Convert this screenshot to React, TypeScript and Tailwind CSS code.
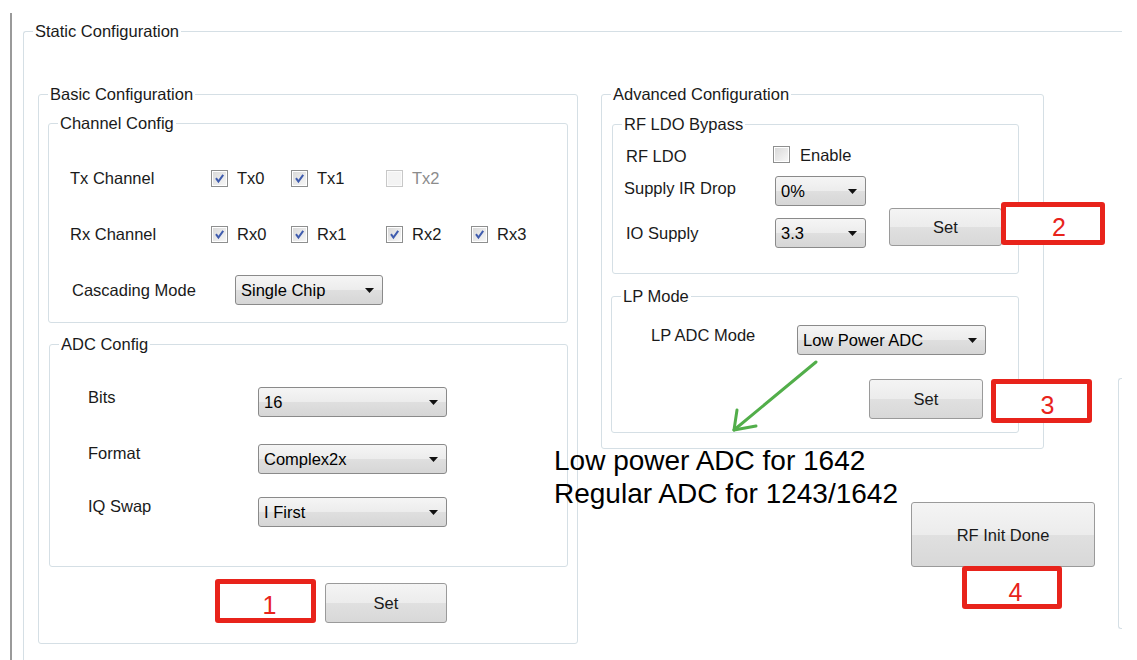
import React from "react";

type BoxProps = {
  title: string;
  className?: string;
  children?: React.ReactNode;
};

// classic windows group box, drawn with fieldset + legend
function GroupBox({ title, className = "", children }: BoxProps) {
  return (
    <fieldset className={`min-w-0 shrink-0 rounded-[3px] border border-[#d5dfe5] ${className}`}>
      <legend className="ml-[9px] px-[2px] leading-[18px]">{title}</legend>
      {children}
    </fieldset>
  );
}

function Checkbox({ checked = false, disabled = false }: { checked?: boolean; disabled?: boolean }) {
  return (
    <span
      className={`flex h-[17px] w-[17px] shrink-0 items-center justify-center border p-[1px] ${
        disabled ? "border-[#c8c8c8] bg-[#fbfbfb]" : "border-[#8e8f8f] bg-white"
      }`}
    >
      <span
        className={`flex h-full w-full items-center justify-center ${
          disabled ? "bg-[#f3f3f3]" : "bg-[linear-gradient(135deg,#d9d9d9,#f7f7f7)]"
        }`}
      >
        {checked && (
          <svg width="11" height="11" viewBox="0 0 11 11">
            <path d="M2 5.2 L4.4 8.6 L9.2 1.8" fill="none" stroke="#3f5cae" strokeWidth="2" />
          </svg>
        )}
      </span>
    </span>
  );
}

function Dropdown({ value, className = "" }: { value: string; className?: string }) {
  return (
    <div
      className={`flex shrink-0 items-center justify-between rounded-[3px] border border-[#8a8a8a] bg-[linear-gradient(to_bottom,#f5f5f5,#ececec_50%,#dfdfdf_51%,#d6d6d6)] pl-[5px] pr-[8px] text-black ${className}`}
    >
      <span className="whitespace-nowrap">{value}</span>
      <svg width="9" height="5" viewBox="0 0 9 5">
        <path d="M0 0H9L4.5 5Z" fill="#111" />
      </svg>
    </div>
  );
}

function Button({ label, className = "" }: { label: string; className?: string }) {
  return (
    <button
      className={`shrink-0 rounded-[3px] border border-[#9a9a9a] bg-[linear-gradient(to_bottom,#f4f4f4,#ececec_50%,#e0e0e0_51%,#d8d8d8)] text-center text-[#1a1a1a] ${className}`}
    >
      {label}
    </button>
  );
}

function Tag({ n, className = "", inner = "" }: { n: string; className?: string; inner?: string }) {
  return (
    <div
      className={`absolute flex items-center justify-center rounded-[3px] border-[5px] border-[#e8231b] bg-white text-[25px] leading-[28px] text-[#e8231b] ${className}`}
    >
      <span className={inner}>{n}</span>
    </div>
  );
}

function CheckItem({ label, checked, disabled, className = "" }: { label: string; checked?: boolean; disabled?: boolean; className?: string }) {
  return (
    <div className={`flex items-center gap-[9px] ${className}`}>
      <Checkbox checked={checked} disabled={disabled} />
      <span className={disabled ? "text-[#8c8c8c]" : ""}>{label}</span>
    </div>
  );
}

export default function App() {
  return (
    <div className="relative h-[660px] w-[1137px] overflow-hidden bg-white font-['Liberation_Sans',Arial,sans-serif] text-[16.5px] leading-[18px] text-[#1a1a1a]">
      <div className="ml-[10px] h-full pt-[13px]">
        <div className="h-full border-l-2 border-[#9a9a9a] pl-[11px] pt-[9px]">
          <GroupBox
            title="Static Configuration"
            className="h-[700px] w-[1099px] rounded-none rounded-tl-[3px] border-b-0 border-r-0"
          >
            <div className="flex items-start">
              {/* Basic Configuration */}
              <GroupBox title="Basic Configuration" className="ml-[14px] mt-[45px] h-[559px] w-[540px]">
                <GroupBox title="Channel Config" className="ml-[9px] mt-[11px] h-[209px] w-[520px]">
                  <div className="flex flex-col pl-[21px] pt-[18px]">
                    <div className="flex h-[56px] items-center">
                      <span className="w-[141px]">Tx Channel</span>
                      <CheckItem label="Tx0" checked className="w-[80px]" />
                      <CheckItem label="Tx1" checked className="w-[95px]" />
                      <CheckItem label="Tx2" disabled />
                    </div>
                    <div className="flex h-[56px] items-center">
                      <span className="w-[141px]">Rx Channel</span>
                      <CheckItem label="Rx0" checked className="w-[80px]" />
                      <CheckItem label="Rx1" checked className="w-[95px]" />
                      <CheckItem label="Rx2" checked className="w-[85px]" />
                      <CheckItem label="Rx3" checked />
                    </div>
                    <div className="flex h-[56px] items-center">
                      <span className="w-[165px] pl-[2px]">Cascading Mode</span>
                      <Dropdown value="Single Chip" className="h-[30px] w-[148px]" />
                    </div>
                  </div>
                </GroupBox>

                <GroupBox title="ADC Config" className="ml-[10px] mt-[12px] h-[232px] w-[519px]">
                  <div className="flex flex-col pl-[38px]">
                    <div className="mt-[34px] flex items-start">
                      <span className="mt-[1px] w-[170px]">Bits</span>
                      <Dropdown value="16" className="h-[30px] w-[189px]" />
                    </div>
                    <div className="mt-[27px] flex items-start">
                      <span className="w-[170px]">Format</span>
                      <Dropdown value="Complex2x" className="h-[30px] w-[189px]" />
                    </div>
                    <div className="mt-[23px] flex items-start">
                      <span className="w-[170px]">IQ Swap</span>
                      <Dropdown value="I First" className="h-[30px] w-[189px]" />
                    </div>
                  </div>
                </GroupBox>

                <div className="ml-[286px] mt-[16px] flex">
                  <Button label="Set" className="h-[40px] w-[122px]" />
                </div>
              </GroupBox>

              {/* Advanced Configuration + RF Init */}
              <div className="ml-[23px] mt-[45px] flex w-[443px] shrink-0 flex-col">
                <GroupBox title="Advanced Configuration" className="h-[364px] w-[443px]">
                  <GroupBox title="RF LDO Bypass" className="ml-[10px] mt-[12px] h-[159px] w-[407px]">
                    <div className="flex items-start">
                      <div className="flex w-[253px] flex-col pl-[13px]">
                        <div className="mt-[13px] flex h-[17px] items-center">
                          <span className="w-[147px] pt-[2px]">RF LDO</span>
                          <CheckItem label="Enable" className="gap-[10px]" />
                        </div>
                        <div className="mt-[13px] flex h-[30px] items-center">
                          <span className="w-[149px] -translate-x-[2px] -translate-y-[3px]">Supply IR Drop</span>
                          <Dropdown value="0%" className="h-[30px] w-[91px]" />
                        </div>
                        <div className="mt-[12px] flex h-[30px] items-center">
                          <span className="w-[149px]">IO Supply</span>
                          <Dropdown value="3.3" className="h-[30px] w-[91px]" />
                        </div>
                      </div>
                      <Button label="Set" className="ml-[23px] mt-[75px] h-[38px] w-[113px]" />
                    </div>
                  </GroupBox>

                  <GroupBox title="LP Mode" className="ml-[9px] mt-[13px] h-[146px] w-[408px]">
                    <div className="mt-[20px] flex items-start pl-[39px]">
                      <span className="mt-[1px] w-[146px]">LP ADC Mode</span>
                      <Dropdown value="Low Power ADC" className="h-[30px] w-[189px]" />
                    </div>
                    <Button label="Set" className="ml-[257px] mt-[24px] h-[40px] w-[114px]" />
                  </GroupBox>
                </GroupBox>

                <Button label="RF Init Done" className="ml-[310px] mt-[53px] h-[65px] w-[184px]" />
              </div>

              {/* next group box, cut off by the window edge */}
              <div className="ml-[74px] mt-[338px] h-[251px] w-[4px] shrink-0 rounded-l-[3px] border-y border-l border-[#d5dfe5]" />
            </div>
          </GroupBox>
        </div>
      </div>

      {/* annotations drawn over the screenshot */}
      <Tag n="1" className="left-[215px] top-[579px] h-[44px] w-[101px]" inner="pl-[8px] pt-[8px]" />
      <Tag n="2" className="left-[1001px] top-[202px] h-[43px] w-[104px]" inner="pl-[12px] pt-[6px]" />
      <Tag n="3" className="left-[991px] top-[379px] h-[44px] w-[101px]" inner="pl-[12px] pt-[8px]" />
      <Tag n="4" className="left-[962px] top-[566px] h-[43px] w-[100px]" inner="pl-[7px] pt-[8px]" />

      <svg className="absolute left-[725px] top-[355px]" width="100" height="85" viewBox="0 0 100 85">
        <path d="M91 7 L9 75" stroke="#52ae4a" strokeWidth="3" strokeLinecap="round" fill="none" />
        <path d="M12 55 L9 75 L31 71" stroke="#52ae4a" strokeWidth="3" strokeLinecap="round" strokeLinejoin="round" fill="none" />
      </svg>

      <div className="absolute left-[554px] top-[444px] text-[28px] leading-[33px] text-black">
        <div>Low power ADC for 1642</div>
        <div>Regular ADC for 1243/1642</div>
      </div>
    </div>
  );
}
